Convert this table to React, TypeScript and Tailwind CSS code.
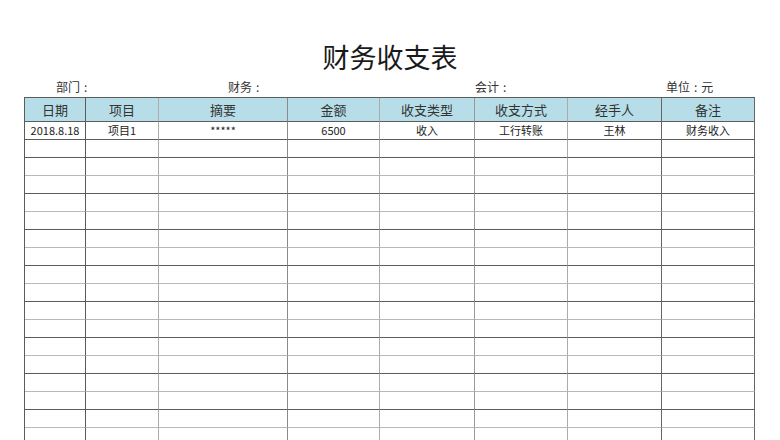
const cols = [
  { w: 'w-[61px]', line: 'border-[#5a5a5a]' },
  { w: 'w-[73px]', line: 'border-[#ababab]' },
  { w: 'w-[129px]', line: 'border-[#8a8a8a]' },
  { w: 'w-[92px]', line: 'border-[#ababab]' },
  { w: 'w-[95px]', line: 'border-[#999999]' },
  { w: 'w-[93px]', line: 'border-[#ababab]' },
  { w: 'w-[94px]', line: 'border-[#666666]' },
  { w: 'w-[93px]', line: 'border-[#666666]' },
]

const headers = ['日期', '项目', '摘要', '金额', '收支类型', '收支方式', '经手人', '备注']
const firstRow = ['2018.8.18', '项目1', '*****', '6500', '收入', '工行转账', '王林', '财务收入']

function Row({ cells, head, light }: { cells: string[]; head?: boolean; light?: boolean }) {
  const bottom = light ? 'border-b-[#b8b8b8]' : 'border-b-[#5c5c5c]'
  return (
    <div className={`flex ${head ? 'h-[24px] bg-[#b7dee8] text-[13px] text-[#333]' : 'h-[18px] text-[11px] text-[#222]'}`}>
      {cols.map((c, i) => (
        <div
          key={i}
          className={`${c.w} shrink-0 border-r border-b ${c.line} ${bottom} flex items-center justify-center leading-none`}
        >
          {cells[i]}
        </div>
      ))}
    </div>
  )
}

function Label({ name, value, className }: { name: string; value?: string; className?: string }) {
  return (
    <span className={`flex gap-[4px] ${className ?? ''}`}>
      <span>{name}</span>
      <span>:</span>
      {value && <span>{value}</span>}
    </span>
  )
}

export default function App() {
  const empty = Array.from({ length: 17 }, (_, i) => i)
  return (
    <div
      className="w-[780px] h-[440px] overflow-hidden bg-white text-[#222]"
      style={{ fontFamily: '"Noto Sans CJK SC", "Noto Sans", sans-serif' }}
    >
      <h1 className="pt-[38px] text-center text-[27px] leading-[38px] text-[#1a1a1a]">财务收支表</h1>
      <div className="flex h-[21px] pl-[56px] text-[12px] leading-[21px] text-[#333]">
        <Label name="部门" className="w-[172px]" />
        <Label name="财务" className="w-[247px]" />
        <Label name="会计" className="w-[191px]" />
        <Label name="单位" value="元" />
      </div>
      <div className="ml-[24px] w-[731px] border-l border-t border-[#5c5c5c]">
        <Row cells={headers} head />
        <Row cells={firstRow} />
        {empty.map((i) => (
          <Row key={i} cells={[]} light={i % 2 === 1} />
        ))}
      </div>
    </div>
  )
}
